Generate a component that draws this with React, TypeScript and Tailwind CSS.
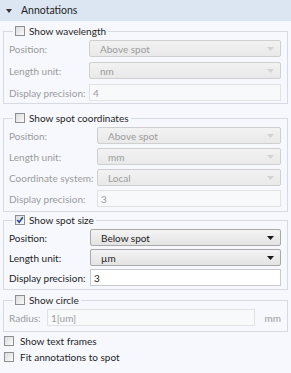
import type { ReactNode } from 'react';

const font = { fontFamily: '"Segoe UI", Lato, "Open Sans", sans-serif' };

function Check({ checked }: { checked?: boolean }) {
    return (
        <span className="relative inline-block w-[10px] h-[10px] border border-[#8e8f8f] bg-gradient-to-br from-[#dcdcdc] to-[#fafafa] shrink-0">
            {checked && (
                <svg viewBox="0 0 8 8" className="absolute inset-0 w-[8px] h-[8px]">
                    <path d="M1.2 4 L3.2 6.3 L6.8 1.3" fill="none" stroke="#21448f" strokeWidth="1.5" />
                </svg>
            )}
        </span>
    );
}

function Select({ value, enabled }: { value: string; enabled?: boolean }) {
    return (
        <div
            className={`flex-1 h-[17px] flex items-center justify-between pl-[10px] pr-[6px] rounded-[2px] border ${enabled
                ? 'border-[#a9a9a9] bg-gradient-to-b from-[#f4f4f4] to-[#e3e3e3] text-[#1e1e1e]'
                : 'border-[#cfcfcf] bg-gradient-to-b from-[#f2f2f2] to-[#e9e9e9] text-[#9b9b9b]'
                }`}
        >
            <span>{value}</span>
            <svg viewBox="0 0 7 4" className="w-[7px] h-[4px]">
                <path d="M0 0 H7 L3.5 4 Z" fill={enabled ? '#1a1a1a' : '#d2d2d2'} />
            </svg>
        </div>
    );
}

function Field({ value, enabled }: { value: string; enabled?: boolean }) {
    return (
        <div
            className={`flex-1 h-[17px] flex items-center pl-[3px] border ${enabled ? 'border-[#cbcbcb] bg-white text-[#1e1e1e]' : 'border-[#e2e2e2] bg-[#f8f9fb] text-[#9b9b9b]'
                }`}
        >
            {value}
        </div>
    );
}

function Row({ label, labelW, enabled, children }: { label: string; labelW: string; enabled?: boolean; children: ReactNode }) {
    return (
        <div className="flex items-center">
            <span className={`${labelW} shrink-0 whitespace-nowrap ${enabled ? 'text-[#1e1e1e]' : 'text-[#9b9b9b]'}`}>{label}</span>
            {children}
        </div>
    );
}

function Group({ title, checked, children, className, bodyClass }: { title: string; checked?: boolean; children: ReactNode; className?: string; bodyClass?: string }) {
    return (
        <fieldset className={`mx-[3px] border border-[#d6dbe2] pl-[5px] pr-[6px] ${className ?? ''}`}>
            <legend className="ml-[4px] px-[2px] h-[12px] flex items-center gap-[4px] text-[#1e1e1e] whitespace-nowrap">
                <Check checked={checked} />
                <span>{title}</span>
            </legend>
            <div className={`flex flex-col ${bodyClass ?? ''}`}>{children}</div>
        </fieldset>
    );
}

export default function App() {
    return (
        <div className="w-[291px] h-[373px] bg-[#f6f8fd] text-[10px] leading-none overflow-hidden" style={font}>
            {/* Header */}
            <div className="h-[21px] bg-[#dce6f2] flex items-center pl-[6px] gap-[9px] text-[#1e1e1e] text-[10.5px]">
                <svg viewBox="0 0 6 4" className="w-[6px] h-[4px]">
                    <path d="M0 0 H6 L3 4 Z" fill="#333" />
                </svg>
                <span>Annotations</span>
            </div>

            <Group title="Show wavelength" className="mt-[4px] pt-[3px] pb-[2px]" bodyClass="gap-[5px]">
                <Row label="Position:" labelW="w-[80px]">
                    <Select value="Above spot" />
                </Row>
                <Row label="Length unit:" labelW="w-[80px]">
                    <Select value="nm" />
                </Row>
                <Row label="Display precision:" labelW="w-[80px]">
                    <Field value="4" />
                </Row>
            </Group>

            <Group title="Show spot coordinates" className="mt-[8px] pt-[3px] pb-[4px]" bodyClass="gap-[4px]">
                <Row label="Position:" labelW="w-[88px]">
                    <Select value="Above spot" />
                </Row>
                <Row label="Length unit:" labelW="w-[88px]">
                    <Select value="mm" />
                </Row>
                <Row label="Coordinate system:" labelW="w-[88px]">
                    <Select value="Local" />
                </Row>
                <Row label="Display precision:" labelW="w-[88px]">
                    <Field value="3" />
                </Row>
            </Group>

            <Group title="Show spot size" checked className="mt-[2px] pt-[3px] pb-[3px]" bodyClass="gap-[3px]">
                <Row label="Position:" labelW="w-[81px]" enabled>
                    <Select value="Below spot" enabled />
                </Row>
                <Row label="Length unit:" labelW="w-[81px]" enabled>
                    <Select value="µm" enabled />
                </Row>
                <Row label="Display precision:" labelW="w-[81px]" enabled>
                    <Field value="3" enabled />
                </Row>
            </Group>

            <Group title="Show circle" className="mt-[4px] pt-[3px] pb-[5px]">
                <Row label="Radius:" labelW="w-[38px]">
                    <Field value="1[um]" />
                    <span className="w-[26px] text-right text-[#9b9b9b]">mm</span>
                </Row>
            </Group>

            <div className="flex flex-col gap-[4px] pl-[4px] pt-[3px] text-[#1e1e1e]">
                <label className="flex items-center gap-[6px] h-[12px]">
                    <Check />
                    <span>Show text frames</span>
                </label>
                <label className="flex items-center gap-[6px] h-[12px]">
                    <Check />
                    <span>Fit annotations to spot</span>
                </label>
            </div>
        </div>
    );
}
